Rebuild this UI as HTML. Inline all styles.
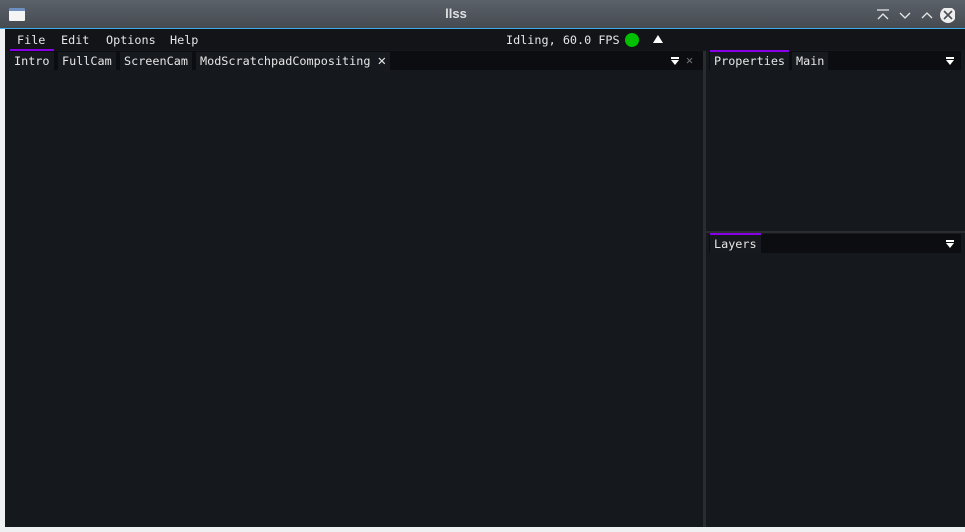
<!DOCTYPE html><html><head><style>
*{margin:0;padding:0;box-sizing:border-box}
body{width:965px;height:532px;background:#eff0f1;position:relative;overflow:hidden;font-family:"DejaVu Sans Mono","Liberation Mono",monospace;font-size:11.8px;color:#e6e6e6}
.a{position:absolute}
#title{left:0;top:0;width:965px;height:28px;background:linear-gradient(#5b6169,#464b52)}
#title .t{left:440px;width:32px;text-align:center;top:6px;color:#dfe1e3;font-family:"Liberation Sans",sans-serif;font-size:13px;font-weight:bold}
#blue{left:0;top:28px;width:965px;height:1px;background:#3daee9}
#main{left:5px;top:29px;width:960px;height:498px;background:#15181c}
#menu{left:5px;top:29px;width:960px;height:21px;background:#121418}
.m{top:33px}
.tabbar{background:#0b0d10;height:19px}
.tab{background:#16191d;height:18px;top:52px;padding:2px 4px;white-space:nowrap}
.ul{height:2px;background:#8a00e6}
</style></head><body>
<div id="title" class="a"><div class="t a">llss</div>
<div class="a" style="left:9px;top:8px;width:16px;height:13px;background:#f4f4f4;border-top:3px solid #6f8fc0;border-radius:1px"></div>
<svg class="a" style="left:875px;top:8px" width="80" height="16" viewBox="0 0 80 16" fill="none" stroke="#e8e8e8" stroke-width="1.3"><path d="M2 2h12M3 11l5-5 5 5"/><path d="M25 5l5 5 5-5"/><path d="M47 10l5-5 5 5"/><circle cx="73" cy="7" r="8" fill="#eeeeee" stroke="none"/><path d="M69 3l8 8M77 3l-8 8" stroke="#4a4f55" stroke-width="1.6"/></svg>
</div>
<div id="blue" class="a"></div>
<div id="main" class="a"></div>
<div id="menu" class="a"></div>
<div class="a m" style="left:17px">File</div>
<div class="a ul" style="left:10px;top:49px;width:44px"></div>
<div class="a m" style="left:61px">Edit</div>
<div class="a m" style="left:106px">Options</div>
<div class="a m" style="left:170px">Help</div>
<div class="a m" style="left:506px">Idling, 60.0 FPS</div>
<div class="a" style="left:625px;top:33px;width:14px;height:14px;border-radius:50%;background:#00c000"></div>
<div class="a" style="left:653px;top:35px;width:0;height:0;border-left:5px solid transparent;border-right:5px solid transparent;border-bottom:8px solid #fff"></div>
<div class="a tabbar" style="left:10px;top:51px;width:693px"></div>
<div class="a tab" style="left:10px">Intro</div>
<div class="a tab" style="left:58px">FullCam</div>
<div class="a tab" style="left:120px">ScreenCam</div>
<div class="a tab" style="left:196px">ModScratchpadCompositing <span style="font-size:14px;line-height:12px">✕</span></div>
<div class="a" style="left:671px;top:57px;width:8px;height:2px;background:#fff"></div>
<div class="a" style="left:671px;top:60px;border-left:4px solid transparent;border-right:4px solid transparent;border-top:5px solid #fff"></div>
<div class="a" style="left:686px;top:53px;color:#777">✕</div>
<div class="a" style="left:703px;top:51px;width:3px;height:476px;background:#2a2c30"></div>
<div class="a tabbar" style="left:709px;top:51px;width:252px"></div>
<div class="a tab" style="left:710px">Properties</div>
<div class="a ul" style="left:710px;top:50px;width:79px"></div>
<div class="a tab" style="left:792px">Main</div>
<div class="a" style="left:946px;top:57px;width:8px;height:2px;background:#fff"></div>
<div class="a" style="left:946px;top:60px;border-left:4px solid transparent;border-right:4px solid transparent;border-top:5px solid #fff"></div>
<div class="a" style="left:706px;top:231px;width:259px;height:2px;background:#2a2c30"></div>
<div class="a tabbar" style="left:709px;top:234px;width:252px"></div>
<div class="a tab" style="left:710px;top:235px">Layers</div>
<div class="a ul" style="left:710px;top:233px;width:51px"></div>
<div class="a" style="left:946px;top:240px;width:8px;height:2px;background:#fff"></div>
<div class="a" style="left:946px;top:243px;border-left:4px solid transparent;border-right:4px solid transparent;border-top:5px solid #fff"></div>
</body></html>
